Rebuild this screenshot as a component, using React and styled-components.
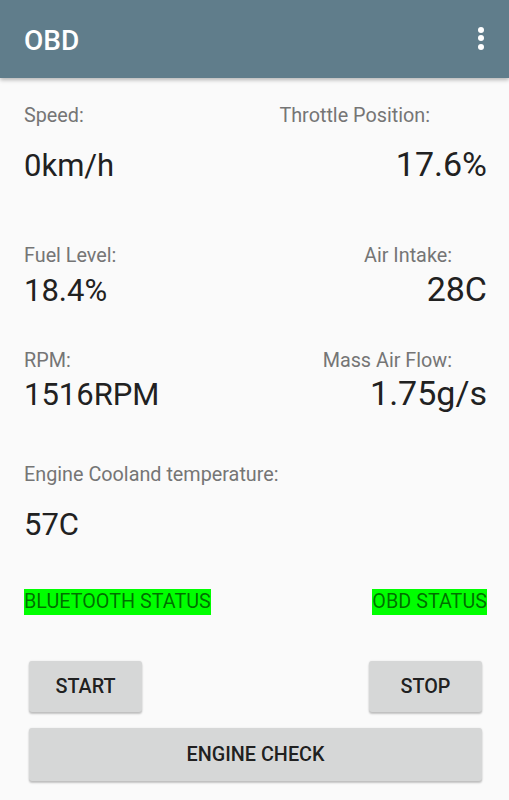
import styled, { createGlobalStyle } from 'styled-components';

const GlobalStyle = createGlobalStyle`
  html, body {
    margin: 0;
    padding: 0;
    background: #FAFAFA;
  }
  body {
    font-family: Roboto, "Noto Sans", "Liberation Sans", sans-serif;
  }
`

const Screen = styled.div`
  width: 509px;
  height: 800px;
  background: #FAFAFA;
  overflow: hidden;
  display: flex;
  flex-direction: column;
`

const AppBar = styled.header`
  height: 78px;
  flex-shrink: 0;
  background: #607D8B;
  box-shadow: 0 2px 4px rgba(0, 0, 0, 0.28);
  display: flex;
  align-items: center;
  justify-content: space-between;
  padding: 2px 22px 0 24px;
  box-sizing: border-box;
  position: relative;
  z-index: 1;
`

const Title = styled.h1`
  margin: 0;
  font-size: 28px;
  font-weight: 500;
  color: #FFFFFF;
`

const Kebab = styled.div`
  display: flex;
  flex-direction: column;
  gap: 2.5px;
  margin-top: -4px;
  margin-right: 3px;

  span {
    width: 6px;
    height: 6px;
    border-radius: 50%;
    background: #FFFFFF;
  }
`

const Content = styled.main`
  padding: 26px 22px 0 24px;
  display: flex;
  flex-direction: column;
`

const Row = styled.div`
  display: flex;
  justify-content: space-between;
  align-items: baseline;
  margin-top: ${({ gap }) => gap || 0}px;
`

const Label = styled.div`
  font-size: 19.8px;
  line-height: 24px;
  color: #757575;
  margin-right: ${({ inset }) => inset || 0}px;
`

const Value = styled.div`
  font-size: ${({ size }) => size || 31}px;
  line-height: 40px;
  color: #212121;
`

const StatusRow = styled.div`
  display: flex;
  justify-content: space-between;
  margin-top: 44px;
`

const Status = styled.div`
  background: #00FF00;
  color: rgba(0, 0, 0, 0.58);
  font-size: 19.8px;
  line-height: 26px;
  height: 26px;
`

const Buttons = styled.div`
  padding: 46px 27px 0 29px;
  display: flex;
  flex-direction: column;
  gap: 16px;
`

const ButtonRow = styled.div`
  display: flex;
  justify-content: space-between;
`

const Button = styled.button`
  width: ${({ wide }) => (wide ? '100%' : '113px')};
  height: ${({ wide }) => (wide ? 53 : 51)}px;
  border: none;
  border-radius: 3px;
  background: #D6D7D7;
  box-shadow: 0 2px 2px rgba(0, 0, 0, 0.22), 0 0 2px rgba(0, 0, 0, 0.1);
  font-family: Roboto, "Liberation Sans", sans-serif;
  font-size: 19.8px;
  font-weight: 500;
  color: rgba(0, 0, 0, 0.87);
  text-transform: uppercase;
  padding: 0;
`

export default function App() {
  return (
    <Screen>
      <GlobalStyle />
      <AppBar>
        <Title>OBD</Title>
        <Kebab><span /><span /><span /></Kebab>
      </AppBar>

      <Content>
        <Row>
          <Label>Speed:</Label>
          <Label inset={57}>Throttle Position:</Label>
        </Row>
        <Row gap={16}>
          <Value>0km/h</Value>
          <Value size={34}>17.6%</Value>
        </Row>

        <Row gap={58}>
          <Label>Fuel Level:</Label>
          <Label inset={35}>Air Intake:</Label>
        </Row>
        <Row gap={1}>
          <Value>18.4%</Value>
          <Value size={34}>28C</Value>
        </Row>

        <Row gap={38}>
          <Label>RPM:</Label>
          <Label inset={35}>Mass Air Flow:</Label>
        </Row>
        <Row>
          <Value>1516RPM</Value>
          <Value size={34}>1.75g/s</Value>
        </Row>

        <Row gap={48}>
          <Label>Engine Cooland temperature:</Label>
        </Row>
        <Row gap={18}>
          <Value>57C</Value>
        </Row>

        <StatusRow>
          <Status>BLUETOOTH STATUS</Status>
          <Status>OBD STATUS</Status>
        </StatusRow>
      </Content>

      <Buttons>
        <ButtonRow>
          <Button>Start</Button>
          <Button>Stop</Button>
        </ButtonRow>
        <Button wide>Engine Check</Button>
      </Buttons>
    </Screen>
  )
}
